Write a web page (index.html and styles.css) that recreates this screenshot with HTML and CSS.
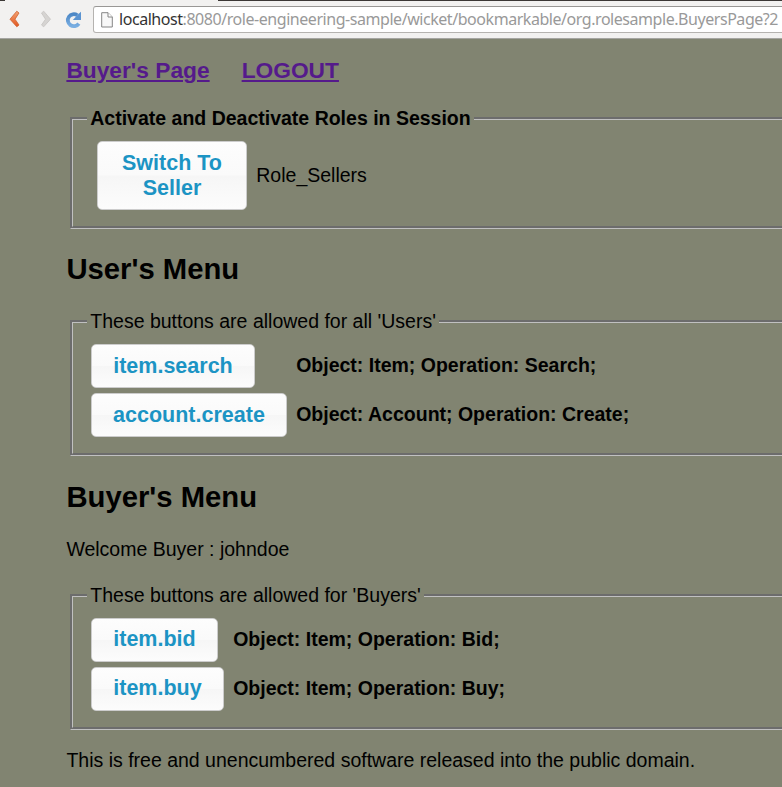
FILE: index.html
```html
<!DOCTYPE html>
<html lang="en">
<head>
<meta charset="utf-8">
<title>Buyer's Page</title>
<link rel="stylesheet" href="styles.css">
</head>
<body>
<header class="toolbar">
  <svg class="icons" width="93" height="38" viewBox="0 0 93 38">
    <defs>
      <linearGradient id="orange" x1="0" y1="0" x2="0" y2="1"><stop offset="0" stop-color="#f3a273"/><stop offset="1" stop-color="#e2561f"/></linearGradient>
      <linearGradient id="blue" x1="0" y1="0" x2="0" y2="1"><stop offset="0" stop-color="#4d88c6"/><stop offset="1" stop-color="#79aee2"/></linearGradient>
    </defs>
    <path d="M16.8 11.2l2.2 1.8-4 6.2 4 5.8-2.2 1.8-6.8-7.6z" fill="url(#orange)" stroke="#cf6230" stroke-width=".8" stroke-linejoin="round"/>
    <path d="M43.7 11.2l-2.2 1.8 4 6.2-4 5.8 2.2 1.8 6.8-7.6z" fill="#d6d4d2" stroke="#c6c4c2" stroke-width=".8" stroke-linejoin="round"/>
    <path d="M78.8 23.6A6 6 0 1 1 77.3 15.3" fill="none" stroke="url(#blue)" stroke-width="3.8"/>
    <path d="M81 11.8v8.2h-8.2l2.8-3 2.8-3z" fill="#5b94d1"/>
  </svg>
  <div class="address">
    <svg class="doc" width="12" height="16" viewBox="0 0 12 16"><path d="M.7.7h6.3l4.3 4.3v10H.7z" fill="#f8f8f8" stroke="#858585"/><path d="M7 .7V5h4.3" fill="#fff" stroke="#858585"/></svg>
    <span class="url"><span class="host">localhost</span>:8080/role-engineering-sample/wicket/bookmarkable/org.rolesample.BuyersPage?2</span>
  </div>
</header>
<main>
  <nav><a href="#buyers">Buyer's Page</a><a href="#logout">LOGOUT</a></nav>
  <fieldset class="roles">
    <legend><b>Activate and Deactivate Roles in Session</b></legend>
    <div class="role"><button class="switch">Switch To Seller</button><span>Role_Sellers</span></div>
  </fieldset>
  <h2>User's Menu</h2>
  <fieldset class="menu users">
    <legend>These buttons are allowed for all 'Users'</legend>
    <div class="grid">
      <button class="search">item.search</button><b>Object: Item; Operation: Search;</b>
      <button class="create">account.create</button><b>Object: Account; Operation: Create;</b>
    </div>
  </fieldset>
  <h2 class="buyers-title">Buyer's Menu</h2>
  <p class="welcome">Welcome Buyer : johndoe</p>
  <fieldset class="menu buyers" id="buyers">
    <legend>These buttons are allowed for 'Buyers'</legend>
    <div class="grid">
      <button class="bid">item.bid</button><b>Object: Item; Operation: Bid;</b>
      <button class="buy">item.buy</button><b>Object: Item; Operation: Buy;</b>
    </div>
  </fieldset>
  <p class="license">This is free and unencumbered software released into the public domain.</p>
</main>
</body>
</html>
```
FILE: styles.css
```css
* { box-sizing: border-box; }
body {
  margin: 0;
  height: 787px;
  overflow: hidden;
  background: #818471;
  color: #000;
  font: 19.5px/22px "Liberation Sans", Arial, sans-serif;
}
.toolbar {
  display: flex;
  height: 39px;
  padding-top: 1px;
  background: linear-gradient(90deg, #3c3836 5px, #f2f1f0 5px 218px, #3c3836 218px) top / 100% 1px no-repeat #f2f1f0;
  border-bottom: 1px solid #a5a5a1;
}
.icons { flex: none; margin-top: -1px; }
.address {
  flex: none;
  display: flex;
  align-items: center;
  width: 700px;
  height: 27px;
  margin-top: 5px;
  padding-left: 7px;
  border: 1px solid #b5b3b0;
  border-top-color: #999795;
  border-radius: 3px;
  background: #fff;
}
.doc { flex: none; }
.url {
  margin-left: 6px;
  padding-bottom: 1px;
  color: #999;
  font: 16px/24px "Noto Sans", sans-serif;
  letter-spacing: -.45px;
  white-space: nowrap;
}
.host { color: #333; }
main { padding-left: 66.4px; }
nav {
  display: flex;
  gap: 32px;
  height: 68px;
  padding-top: 20px;
  font-size: 22.75px;
  font-weight: bold;
}
nav a { color: #551a8b; }
fieldset {
  width: 740px;
  margin: 0 0 0 3.6px;
  padding: 0 0 0 14px;
  border: 3px groove #c0c0c0;
}
legend { height: 22px; padding: 0 3.5px 0 3.3px; white-space: nowrap; }
.roles { height: 122px; }
.role { display: flex; align-items: center; gap: 9.3px; padding: 12px 0 0 10px; }
.role span { padding-bottom: 2px; }
button {
  height: 44px;
  padding: 0;
  border: 1px solid #ccc;
  border-radius: 5px;
  background: linear-gradient(#fdfdfd 0%, #fafafa 49%, #f6f6f6 51%, #fcfcfc 100%);
  color: #1c94c4;
  font: bold 21.5px/25px "Liberation Sans", Arial, sans-serif;
}
.switch { width: 150px; height: 69px; padding: 0 20px; }
h2 { height: 36px; margin: 22px 0 23px; font-size: 29.25px; line-height: 36px; }
.buyers-title { margin-top: 23px; }
.users { height: 146px; }
.grid {
  display: grid;
  grid-template-columns: max-content max-content;
  gap: 5px 9.2px;
  align-items: center;
  padding: 12px 0 0 4px;
}
.grid b { padding-bottom: 2px; }
.search { width: 164px; }
.create { width: 196px; }
.bid { width: 127px; padding-bottom: 2px; }
.buy { width: 133px; padding-bottom: 2px; }
.welcome { height: 22px; margin: 0 0 24px; }
.buyers { height: 146px; }
.license { margin: 19px 0 0; }
```
